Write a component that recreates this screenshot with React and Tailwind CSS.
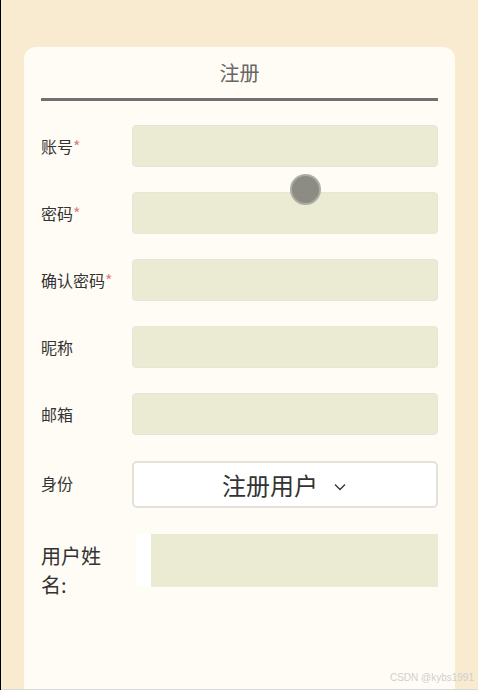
import React from 'react';

const font = { fontFamily: '"Noto Sans CJK SC", "Noto Sans", sans-serif' };

function Field({ label, required, className = '' }) {
  return (
    <div className={`flex items-center ${className}`}>
      <div className="w-[91px] shrink-0 text-[16px] text-[#333] leading-5">
        {label}
        {required && <span className="text-[#dd8080]">*</span>}
      </div>
      <div className="flex-1 h-[42px] rounded-[4px] bg-[#ebebd4] border border-[#e6e6d8]"></div>
    </div>
  );
}

export default function App() {
  return (
    <div
      style={font}
      className="relative h-[690px] w-[478px] overflow-hidden bg-[#f8ebcf] border-l border-black pl-[23px] pr-[23px] pt-[47px]"
    >
      {/* Card */}
      <div className="h-[700px] rounded-t-[12px] bg-[#fffcf5] px-[17px] pt-[12px]">
        <h2 className="text-center text-[20px] leading-7 text-[#666] font-normal">注册</h2>
        <div className="mt-[11px] h-[3px] bg-[#707070]"></div>

        <div className="mt-[24px] flex flex-col gap-[25px]">
          <Field label="账号" required />
          <Field label="密码" required />
          <Field label="确认密码" required />
          <Field label="昵称" />
          <Field label="邮箱" />
        </div>

        {/* Identity select */}
        <div className="mt-[26px] flex items-center">
          <div className="w-[91px] shrink-0 text-[16px] text-[#333] leading-5 -mt-[4px]">身份</div>
          <div className="flex-1 h-[47px] rounded-[5px] border-2 border-[#e2e2da] bg-white flex items-center justify-center gap-[16px] pr-[2px]">
            <span className="text-[24px] leading-8 text-[#333]">注册用户</span>
            <svg width="12" height="8" viewBox="0 0 12 8" className="mt-[4px]">
              <polyline points="1,1.5 6,6.5 11,1.5" fill="none" stroke="#333" strokeWidth="1.3" />
            </svg>
          </div>
        </div>

        {/* User real name */}
        <div className="mt-[26px] flex items-start">
          <div className="w-[95px] shrink-0 pt-[7px]">
            <div className="w-[66px] text-[20px] leading-[29px] text-[#333]">用户姓名:</div>
          </div>
          <div className="flex-1 h-[53px] flex">
            <div className="w-[15px] bg-white rounded-l-[5px]"></div>
            <div className="flex-1 bg-[#ebebd4]"></div>
          </div>
        </div>
      </div>

      {/* Touch indicator */}
      <div className="absolute left-[289px] top-[174px] w-[31px] h-[31px] rounded-full bg-[#87877f] border-2 border-[#a9a9a2] opacity-95"></div>

      {/* Watermark */}
      <div className="absolute right-[4px] bottom-[7px] text-[10px] leading-none text-[#cfcfcf]" style={{ fontFamily: '"Liberation Sans", sans-serif' }}>
        CSDN @kybs1991
      </div>
      <div className="absolute left-0 right-0 bottom-0 h-px bg-[#d8d8d8]"></div>
    </div>
  );
}
